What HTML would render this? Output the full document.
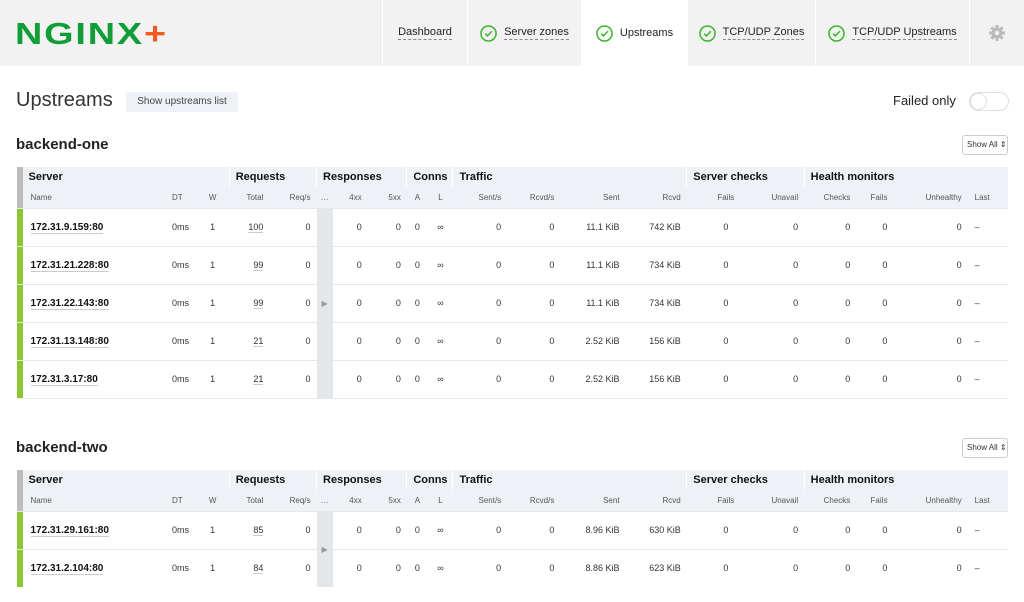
<!DOCTYPE html><html><head><style>
*{margin:0;padding:0;box-sizing:border-box}
body{width:1024px;height:602px;overflow:hidden;background:#fff;font-family:"Liberation Sans",sans-serif;color:#222;position:relative}
.hdr{position:absolute;left:0;top:0;width:1024px;height:66px;background:#f2f2f2}
.tab{position:absolute;top:0;height:66px;border-left:1px solid #fff;font-size:11px;display:flex;align-items:center;justify-content:center;gap:7px}
.tab span{border-bottom:1px dashed #888;line-height:13px}
.ck{width:17px;height:17px}
.logo{position:absolute;left:15px;top:19px;font-weight:bold;font-size:31px;color:#119e38;line-height:30px;transform-origin:0 0;transform:scaleX(1.22);letter-spacing:1.5px;white-space:nowrap}
h1{position:absolute;left:16px;top:89px;font-weight:normal;font-size:20px;color:#333}
.btn{position:absolute;background:#eef2f6;font-size:10px;color:#444}
h2{position:absolute;left:16px;font-size:15px;font-weight:bold}
.sel{position:absolute;left:962px;width:46px;height:20px;border:1px solid #ccc;border-radius:3px;font-size:8px;line-height:18px;padding-left:4px;color:#333;background:#fff}
table{position:absolute;left:16px;border-collapse:collapse;table-layout:fixed;width:992px;font-size:9px}
td{padding:0;white-space:nowrap;overflow:hidden}
.g td{background:#eef2f6;font-weight:bold;font-size:11px;height:20px;padding-left:6px;border-left:1px solid #fff;color:#111}
.s td{background:#eef2f6;color:#555;font-size:8px;height:21px}
.r td{height:38px;border-top:1px solid #e8e8e8;color:#333}
.r td.n{font-weight:bold;font-size:10px;color:#111;padding-left:8px}
.r td.n span,.u{border-bottom:1px solid #ccc}
.R{text-align:right;padding-right:6px}.C{text-align:center}
.st{background:#8ac732}
.sh{background:#bdbdbd !important}
.dots{background:#e4e7ea!important}
</style></head><body>
<div class="hdr">
<div class="logo"><span>NGINX</span><span style="color:#f15a22">+</span></div>
<div class="tab" style="left:382px;width:85px"><span>Dashboard</span></div>
<div class="tab" style="left:467px;width:114px"><svg class="ck" viewBox="0 0 18 18"><circle cx="9" cy="9" r="8" fill="none" stroke="#3cb52a" stroke-width="1.6"/><path d="M5.5 9.2l2.4 2.4 4.6-5" fill="none" stroke="#3cb52a" stroke-width="1.6"/></svg><span>Server zones</span></div>
<div class="tab" style="left:581px;width:106px;background:#fff"><svg class="ck" viewBox="0 0 18 18"><circle cx="9" cy="9" r="8" fill="none" stroke="#3cb52a" stroke-width="1.6"/><path d="M5.5 9.2l2.4 2.4 4.6-5" fill="none" stroke="#3cb52a" stroke-width="1.6"/></svg><span style="border:0">Upstreams</span></div>
<div class="tab" style="left:687px;width:128px"><svg class="ck" viewBox="0 0 18 18"><circle cx="9" cy="9" r="8" fill="none" stroke="#3cb52a" stroke-width="1.6"/><path d="M5.5 9.2l2.4 2.4 4.6-5" fill="none" stroke="#3cb52a" stroke-width="1.6"/></svg><span>TCP/UDP Zones</span></div>
<div class="tab" style="left:815px;width:154px"><svg class="ck" viewBox="0 0 18 18"><circle cx="9" cy="9" r="8" fill="none" stroke="#3cb52a" stroke-width="1.6"/><path d="M5.5 9.2l2.4 2.4 4.6-5" fill="none" stroke="#3cb52a" stroke-width="1.6"/></svg><span>TCP/UDP Upstreams</span></div>
<div class="tab" style="left:969px;width:55px"><svg width="18" height="18" viewBox="0 0 18 18"><g fill="#bbb"><circle cx="9" cy="9" r="5.5"/><rect x="7.5" y="1" width="3" height="16"/><rect x="1" y="7.5" width="16" height="3"/><rect x="7.5" y="1" width="3" height="16" transform="rotate(45 9 9)"/><rect x="7.5" y="1" width="3" height="16" transform="rotate(-45 9 9)"/></g><circle cx="9" cy="9" r="2.2" fill="#f2f2f2"/></svg></div>
</div>
<h1>Upstreams</h1>
<div class="btn" style="left:126px;top:92px;width:112px;height:20px;line-height:20px;text-align:center">Show upstreams list</div>
<div style="position:absolute;left:893px;top:93px;font-size:13px;color:#222">Failed only</div>
<div style="position:absolute;left:969px;top:92px;width:40px;height:19px;border:1px solid #ddd;border-radius:10px"><div style="width:17px;height:17px;border:1px solid #ddd;border-radius:50%;background:#fff"></div></div>

<h2 style="top:136px">backend-one</h2>
<div class="sel" style="top:135px">Show All ⇕</div>
<table style="top:167px">
<colgroup><col style="width:6px"><col style="width:138px"><col style="width:35px"><col style="width:33px"><col style="width:40px"><col style="width:47px"><col style="width:16px"><col style="width:43px"><col style="width:31px"><col style="width:21px"><col style="width:25px"><col style="width:57px"><col style="width:50px"><col style="width:65px"><col style="width:61px"><col style="width:58px"><col style="width:59px"><col style="width:55px"><col style="width:40px"><col style="width:68px"><col style="width:40px"></colgroup>
<tr class="g"><td class="sh" style="padding:0"></td><td colspan="3" style="border-left:0">Server</td><td colspan="2">Requests</td><td colspan="3">Responses</td><td colspan="2">Conns</td><td colspan="4">Traffic</td><td colspan="2">Server checks</td><td colspan="4">Health monitors</td></tr>
<tr class="s"><td class="sh"></td><td style="padding-left:8px">Name</td><td style="padding-left:11px">DT</td><td class="C">W</td><td class="R">Total</td><td class="R">Req/s</td><td class="C">…</td><td class="R" style="padding-right:14px">4xx</td><td class="R">5xx</td><td class="C">A</td><td class="C">L</td><td class="R" style="padding-right:9px">Sent/s</td><td class="R">Rcvd/s</td><td class="R">Sent</td><td class="R">Rcvd</td><td class="C" style="padding-left:20px">Fails</td><td class="R">Unavail</td><td class="R" style="padding-right:9px">Checks</td><td class="R" style="padding-right:12px">Fails</td><td class="R">Unhealthy</td><td style="padding-left:7px">Last</td></tr>
<tr class="r"><td class="st"></td><td class="n"><span>172.31.9.159:80</span></td><td style="padding-left:11px">0ms</td><td class="C">1</td><td class="R"><span class="u">100</span></td><td class="R">0</td><td class="dots" rowspan="5" style="color:#999;font-size:8px;text-align:center">▶</td><td class="R" style="padding-right:14px">0</td><td class="R">0</td><td class="C">0</td><td class="C">∞</td><td class="R" style="padding-right:9px">0</td><td class="R">0</td><td class="R">11.1 KiB</td><td class="R">742 KiB</td><td class="C" style="padding-left:20px">0</td><td class="R">0</td><td class="R" style="padding-right:9px">0</td><td class="R" style="padding-right:12px">0</td><td class="R">0</td><td style="padding-left:7px">–</td></tr>
<tr class="r"><td class="st"></td><td class="n"><span>172.31.21.228:80</span></td><td style="padding-left:11px">0ms</td><td class="C">1</td><td class="R"><span class="u">99</span></td><td class="R">0</td><td class="R" style="padding-right:14px">0</td><td class="R">0</td><td class="C">0</td><td class="C">∞</td><td class="R" style="padding-right:9px">0</td><td class="R">0</td><td class="R">11.1 KiB</td><td class="R">734 KiB</td><td class="C" style="padding-left:20px">0</td><td class="R">0</td><td class="R" style="padding-right:9px">0</td><td class="R" style="padding-right:12px">0</td><td class="R">0</td><td style="padding-left:7px">–</td></tr>
<tr class="r"><td class="st"></td><td class="n"><span>172.31.22.143:80</span></td><td style="padding-left:11px">0ms</td><td class="C">1</td><td class="R"><span class="u">99</span></td><td class="R">0</td><td class="R" style="padding-right:14px">0</td><td class="R">0</td><td class="C">0</td><td class="C">∞</td><td class="R" style="padding-right:9px">0</td><td class="R">0</td><td class="R">11.1 KiB</td><td class="R">734 KiB</td><td class="C" style="padding-left:20px">0</td><td class="R">0</td><td class="R" style="padding-right:9px">0</td><td class="R" style="padding-right:12px">0</td><td class="R">0</td><td style="padding-left:7px">–</td></tr>
<tr class="r"><td class="st"></td><td class="n"><span>172.31.13.148:80</span></td><td style="padding-left:11px">0ms</td><td class="C">1</td><td class="R"><span class="u">21</span></td><td class="R">0</td><td class="R" style="padding-right:14px">0</td><td class="R">0</td><td class="C">0</td><td class="C">∞</td><td class="R" style="padding-right:9px">0</td><td class="R">0</td><td class="R">2.52 KiB</td><td class="R">156 KiB</td><td class="C" style="padding-left:20px">0</td><td class="R">0</td><td class="R" style="padding-right:9px">0</td><td class="R" style="padding-right:12px">0</td><td class="R">0</td><td style="padding-left:7px">–</td></tr>
<tr class="r"><td class="st"></td><td class="n"><span>172.31.3.17:80</span></td><td style="padding-left:11px">0ms</td><td class="C">1</td><td class="R"><span class="u">21</span></td><td class="R">0</td><td class="R" style="padding-right:14px">0</td><td class="R">0</td><td class="C">0</td><td class="C">∞</td><td class="R" style="padding-right:9px">0</td><td class="R">0</td><td class="R">2.52 KiB</td><td class="R">156 KiB</td><td class="C" style="padding-left:20px">0</td><td class="R">0</td><td class="R" style="padding-right:9px">0</td><td class="R" style="padding-right:12px">0</td><td class="R">0</td><td style="padding-left:7px">–</td></tr>
<tr><td colspan="21" style="border-top:1px solid #e8e8e8;height:0"></td></tr>
</table>

<h2 style="top:439px">backend-two</h2>
<div class="sel" style="top:438px">Show All ⇕</div>
<table style="top:470px">
<colgroup><col style="width:6px"><col style="width:138px"><col style="width:35px"><col style="width:33px"><col style="width:40px"><col style="width:47px"><col style="width:16px"><col style="width:43px"><col style="width:31px"><col style="width:21px"><col style="width:25px"><col style="width:57px"><col style="width:50px"><col style="width:65px"><col style="width:61px"><col style="width:58px"><col style="width:59px"><col style="width:55px"><col style="width:40px"><col style="width:68px"><col style="width:40px"></colgroup>
<tr class="g"><td class="sh" style="padding:0"></td><td colspan="3" style="border-left:0">Server</td><td colspan="2">Requests</td><td colspan="3">Responses</td><td colspan="2">Conns</td><td colspan="4">Traffic</td><td colspan="2">Server checks</td><td colspan="4">Health monitors</td></tr>
<tr class="s"><td class="sh"></td><td style="padding-left:8px">Name</td><td style="padding-left:11px">DT</td><td class="C">W</td><td class="R">Total</td><td class="R">Req/s</td><td class="C">…</td><td class="R" style="padding-right:14px">4xx</td><td class="R">5xx</td><td class="C">A</td><td class="C">L</td><td class="R" style="padding-right:9px">Sent/s</td><td class="R">Rcvd/s</td><td class="R">Sent</td><td class="R">Rcvd</td><td class="C" style="padding-left:20px">Fails</td><td class="R">Unavail</td><td class="R" style="padding-right:9px">Checks</td><td class="R" style="padding-right:12px">Fails</td><td class="R">Unhealthy</td><td style="padding-left:7px">Last</td></tr>
<tr class="r"><td class="st"></td><td class="n"><span>172.31.29.161:80</span></td><td style="padding-left:11px">0ms</td><td class="C">1</td><td class="R"><span class="u">85</span></td><td class="R">0</td><td class="dots" rowspan="2" style="color:#999;font-size:8px;text-align:center">▶</td><td class="R" style="padding-right:14px">0</td><td class="R">0</td><td class="C">0</td><td class="C">∞</td><td class="R" style="padding-right:9px">0</td><td class="R">0</td><td class="R">8.96 KiB</td><td class="R">630 KiB</td><td class="C" style="padding-left:20px">0</td><td class="R">0</td><td class="R" style="padding-right:9px">0</td><td class="R" style="padding-right:12px">0</td><td class="R">0</td><td style="padding-left:7px">–</td></tr>
<tr class="r"><td class="st"></td><td class="n"><span>172.31.2.104:80</span></td><td style="padding-left:11px">0ms</td><td class="C">1</td><td class="R"><span class="u">84</span></td><td class="R">0</td><td class="R" style="padding-right:14px">0</td><td class="R">0</td><td class="C">0</td><td class="C">∞</td><td class="R" style="padding-right:9px">0</td><td class="R">0</td><td class="R">8.86 KiB</td><td class="R">623 KiB</td><td class="C" style="padding-left:20px">0</td><td class="R">0</td><td class="R" style="padding-right:9px">0</td><td class="R" style="padding-right:12px">0</td><td class="R">0</td><td style="padding-left:7px">–</td></tr>
</table>
</body></html>
